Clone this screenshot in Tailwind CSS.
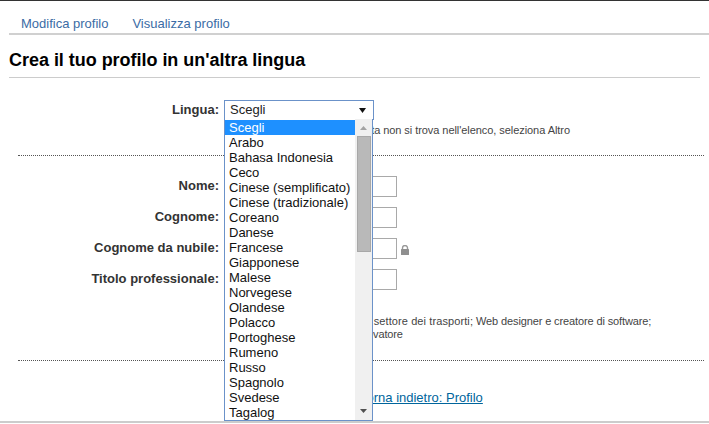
<!DOCTYPE html>
<html lang="it">
<head>
<meta charset="utf-8">
<script src="https://cdn.jsdelivr.net/npm/@tailwindcss/browser@4"></script>
</head>
<body class="bg-white">
<div class="relative w-[709px] h-[424px] overflow-hidden bg-white font-['Liberation_Sans',Arial,sans-serif] text-[#333] border-t border-[#333]">
  <nav class="ml-[9px] h-[34px] border-b-2 border-[#d0d0d0] pl-[12px] flex items-start pt-[16px] gap-[24px] text-[13px] leading-[14px] text-[#3b6ca5]">
    <a>Modifica profilo</a>
    <a>Visualizza profilo</a>
  </nav>
  <h1 class="mx-[9px] mt-[14px] h-[29px] border-b border-[#ccc] text-[18px] leading-[22px] font-bold text-black tracking-[-0.03px]">Crea il tuo profilo in un'altra lingua</h1>

  <div class="mt-[22px] flex items-start">
    <label class="w-[219px] text-right text-[13px] leading-[19px] font-bold">Lingua:</label>
    <div class="ml-[5px] w-[150px] h-[20px] border border-[#6b92c9] flex items-center justify-between pl-[5px] pr-[7px] text-[13px] text-[#222]">
      <span>Scegli</span>
      <svg width="7" height="5" viewBox="0 0 7 5"><path d="M0 0h7L3.5 5z" fill="#111"/></svg>
    </div>
  </div>
  <p class="ml-[224px] pl-[18.5px] mt-[3px] text-[11px] leading-[14px] text-[#444] whitespace-nowrap tracking-[-0.06px]">Se la lingua da te desiderata non si trova nell'elenco, seleziona Altro</p>

  <div class="ml-[18px] mr-[5px] mt-[18px] border-t border-dotted border-[#555]"></div>

  <div class="mt-[20px] flex flex-col gap-[10px]">
    <div class="flex items-center h-[21px]"><label class="w-[219px] text-right text-[13px] font-bold -translate-y-px">Nome:</label><input class="ml-[5px] w-[173px] h-[21px] border border-[#a9a9a9]"></div>
    <div class="flex items-center h-[21px]"><label class="w-[219px] text-right text-[13px] font-bold -translate-y-px">Cognome:</label><input class="ml-[5px] w-[173px] h-[21px] border border-[#a9a9a9]"></div>
    <div class="flex items-center h-[21px]"><label class="w-[219px] text-right text-[13px] font-bold -translate-y-px">Cognome da nubile:</label><input class="ml-[5px] w-[173px] h-[21px] border border-[#a9a9a9]">
      <svg class="ml-[4px] mt-[2px]" width="8" height="10" viewBox="0 0 8 10"><path d="M1.5 4.5V3a2.5 2.5 0 0 1 5 0v1.5" fill="none" stroke="#999" stroke-width="1.4"/><rect x="0" y="4" width="8" height="6" rx="0.5" fill="#8f8f8f"/></svg>
    </div>
    <div class="flex items-center h-[21px]"><label class="w-[219px] text-right text-[13px] font-bold -translate-y-px">Titolo professionale:</label><input class="ml-[5px] w-[173px] h-[21px] border border-[#a9a9a9]"></div>
  </div>

  <p class="ml-[224px] mt-[25px] w-[480px] text-[11px] leading-[13px] text-[#444] tracking-[-0.12px]">
    <span class="inline-block ml-[1px] whitespace-nowrap">Esempi: Addetto marketing nel <span class="tracking-[0.1px]">settore dei trasporti;</span> Web designer e creatore di software;</span><br>Imprenditore, ricercatore e innovatore
  </p>

  <div class="ml-[18px] mr-[5px] mt-[19px] border-t border-dotted border-[#555]"></div>

  <div class="ml-[224px] mt-[29px] text-[13px] leading-[16px] pl-[136px]">
    <a class="text-[#00659c] underline">Torna indietro: Profilo</a>
  </div>

  <div class="absolute left-0 right-0 top-[420px] border-t-2 border-[#ccc]"></div>

  <div class="absolute left-[224px] top-[118px] w-[149px] h-[302px] bg-white border border-t-0 border-[#6b92c9] flex">
    <ul class="w-[130px] text-[13px] leading-[15px] text-[#111] pt-px">
      <li class="bg-[#1e90ff] text-white pl-[4px] h-[15px]">Scegli</li>
      <li class="pl-[4px] whitespace-nowrap">Arabo</li>
      <li class="pl-[4px] whitespace-nowrap">Bahasa Indonesia</li>
      <li class="pl-[4px] whitespace-nowrap">Ceco</li>
      <li class="pl-[4px] whitespace-nowrap">Cinese (semplificato)</li>
      <li class="pl-[4px] whitespace-nowrap">Cinese (tradizionale)</li>
      <li class="pl-[4px] whitespace-nowrap">Coreano</li>
      <li class="pl-[4px] whitespace-nowrap">Danese</li>
      <li class="pl-[4px] whitespace-nowrap">Francese</li>
      <li class="pl-[4px] whitespace-nowrap">Giapponese</li>
      <li class="pl-[4px] whitespace-nowrap">Malese</li>
      <li class="pl-[4px] whitespace-nowrap">Norvegese</li>
      <li class="pl-[4px] whitespace-nowrap">Olandese</li>
      <li class="pl-[4px] whitespace-nowrap">Polacco</li>
      <li class="pl-[4px] whitespace-nowrap">Portoghese</li>
      <li class="pl-[4px] whitespace-nowrap">Rumeno</li>
      <li class="pl-[4px] whitespace-nowrap">Russo</li>
      <li class="pl-[4px] whitespace-nowrap">Spagnolo</li>
      <li class="pl-[4px] whitespace-nowrap">Svedese</li>
      <li class="pl-[4px] whitespace-nowrap">Tagalog</li>
    </ul>
    <div class="w-[17px] ml-auto bg-[#f0f0f0] flex flex-col items-center">
      <svg class="mt-[7px]" width="7" height="4" viewBox="0 0 7 4"><path d="M0 4h7L3.5 0z" fill="#a3a3a3"/></svg>
      <div class="mt-[6px] w-[14px] h-[116px] bg-[#b9b9b9] border border-[#a8a8a8]"></div>
      <svg class="mt-auto mb-[7px]" width="7" height="4" viewBox="0 0 7 4"><path d="M0 0h7L3.5 4z" fill="#505050"/></svg>
    </div>
  </div>
</div>
</body>
</html>
